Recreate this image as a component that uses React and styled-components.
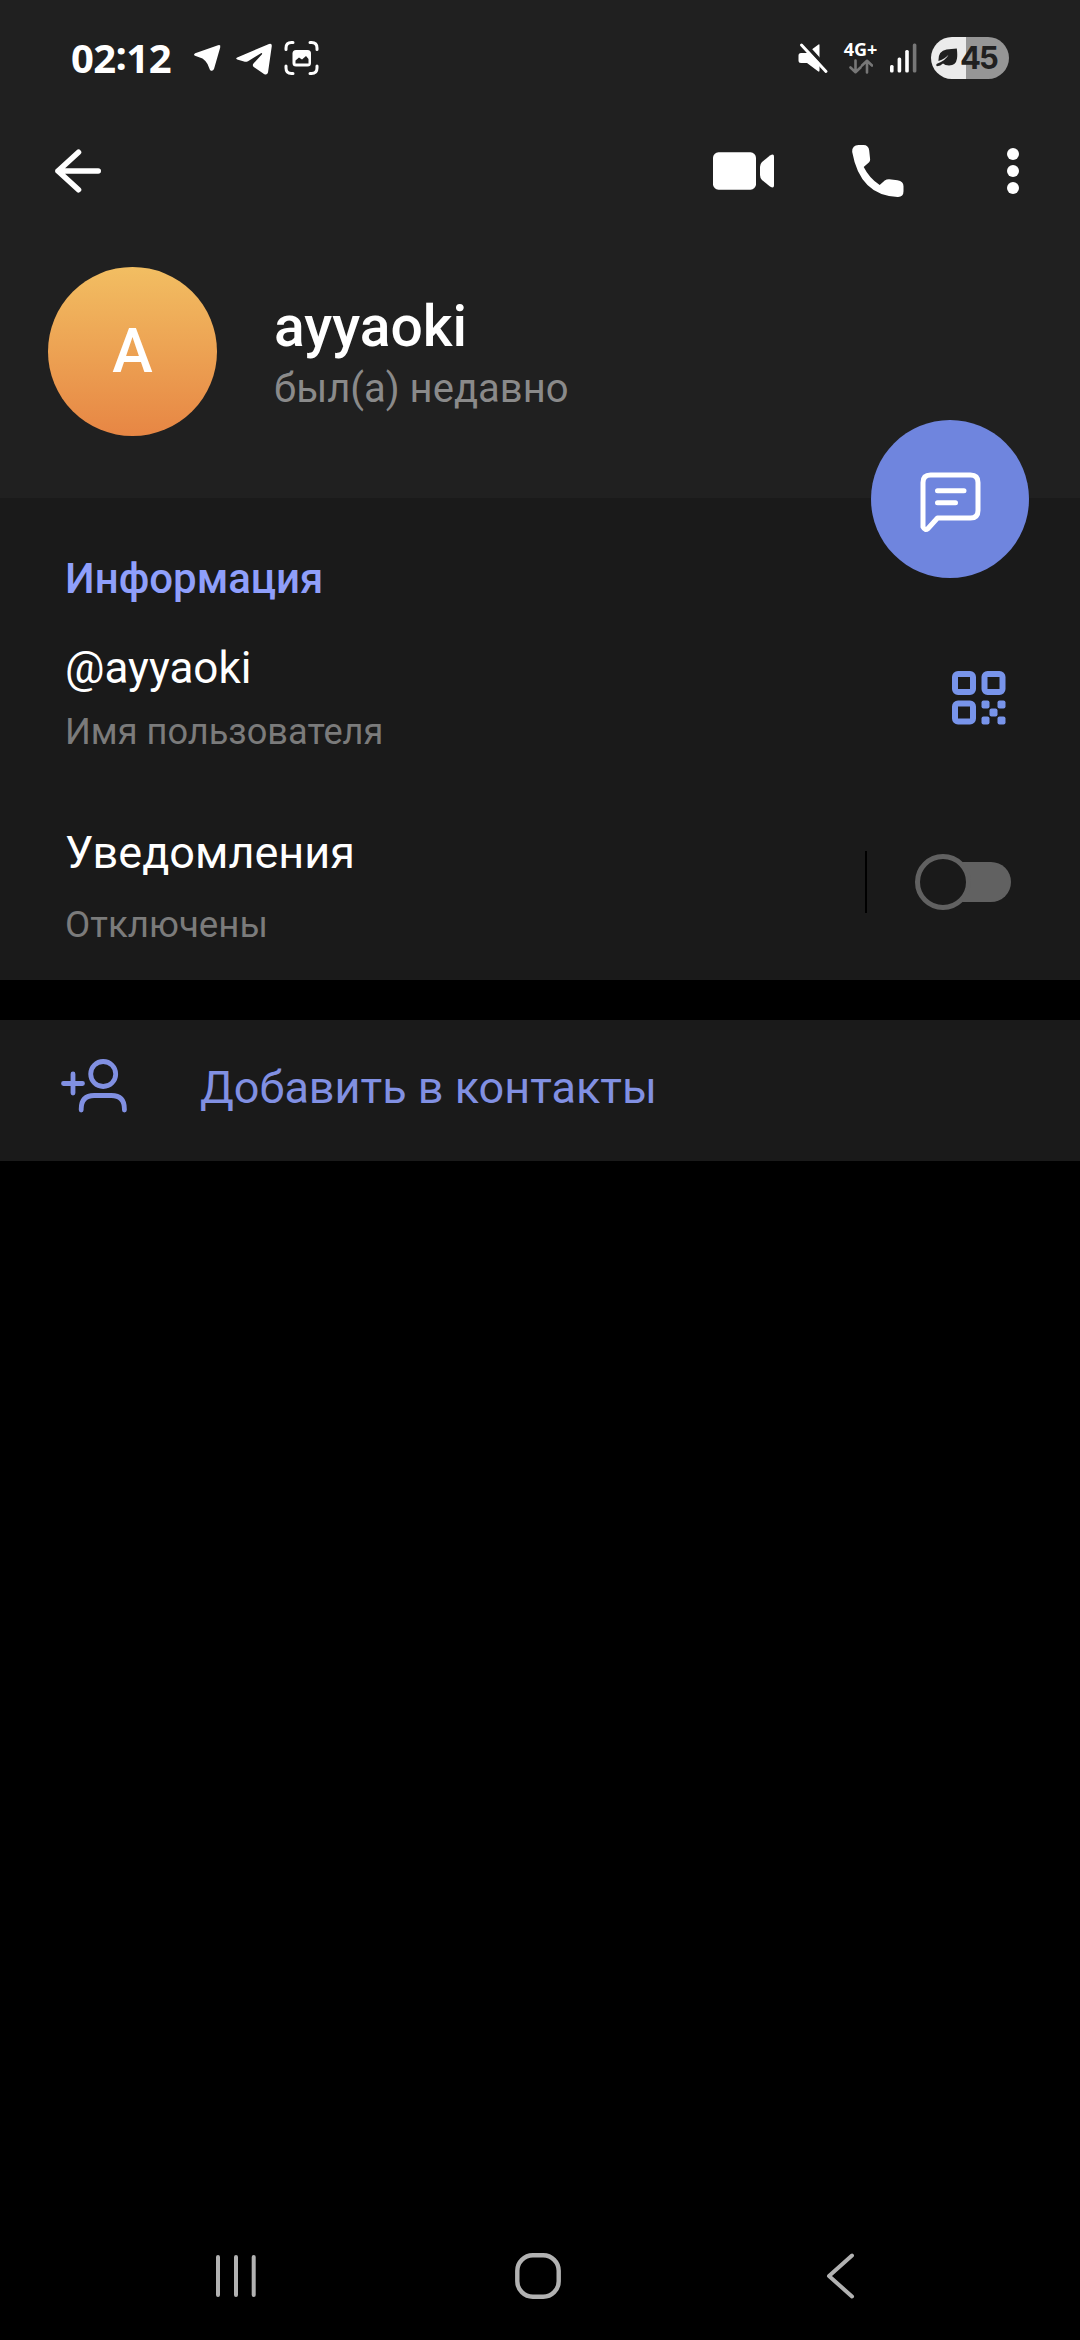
import styled, { createGlobalStyle } from "styled-components";

const GlobalStyle = createGlobalStyle`
    * {
        box-sizing: border-box;
    }

    body {
        margin: 0;
        background-color: #000;
        font-family: Roboto, sans-serif;
    }

    svg {
        display: block;
        flex-shrink: 0;
    }

    button {
        background: none;
        border: none;
        padding: 0;
        font: inherit;
        color: inherit;
    }
`;

const Screen = styled.div`
    display: flex;
    flex-direction: column;
    width: 1080px;
    height: 2340px;
    background-color: #000;
    color: #fff;
    overflow: hidden;
`;

const Header = styled.header`
    height: 498px;
    background-color: #202020;
`;

const StatusBar = styled.div`
    display: flex;
    align-items: center;
    height: 116px;
    padding: 0 71px;
`;

const Time = styled.span`
    width: 122px;
    font-family: "Open Sans", sans-serif;
    font-size: 40px;
    font-weight: 700;
    line-height: 48px;
    letter-spacing: -0.6px;
    white-space: nowrap;
`;

const Colon = styled.span`
    line-height: 1;
    vertical-align: 3px;
`;

const StatusIcons = styled.div`
    display: flex;
    align-items: center;
    margin-left: ${(props) => (props.$end ? "auto" : "0")};
    gap: ${(props) => props.$gap}px;
`;

const Network = styled.div`
    display: flex;
    flex-direction: column;
    align-items: center;
    gap: 3px;
    width: 35px;
    margin-right: -2px;
    font-family: "Open Sans", sans-serif;
    font-size: 18px;
    font-weight: 700;
    line-height: 14px;
    white-space: nowrap;
`;

const Battery = styled.div`
    display: flex;
    align-items: center;
    width: 78px;
    height: 42px;
    padding-left: 5px;
    border-radius: 21px;
    background: linear-gradient(
        to right,
        #ebebeb 0 ${(props) => props.$level}%,
        #969696 ${(props) => props.$level}% 100%
    );
    color: #202020;
    font-family: Inter, sans-serif;
    font-size: 31px;
    font-weight: 700;
    line-height: 42px;
    letter-spacing: -2px;

    svg {
        margin-right: 2px;
    }
`;

const Toolbar = styled.div`
    display: flex;
    align-items: center;
    height: 110px;
    padding: 0 61px 0 55px;
`;

const IconButton = styled.button`
    margin-left: ${(props) => props.$left || "0"};
    margin-right: ${(props) => props.$right || "0"};
`;

const Profile = styled.div`
    display: flex;
    gap: 57px;
    padding: 41px 48px 0;
`;

const Avatar = styled.div`
    width: 169px;
    height: 169px;
    border-radius: 50%;
    background: linear-gradient(#f2be62, #e78644);
    font-size: 61px;
    font-weight: 500;
    line-height: 169px;
    text-align: center;
`;

const Name = styled.h1`
    margin: 30px 0 7px;
    font-size: 57px;
    font-weight: 500;
    line-height: 60px;
`;

const LastSeen = styled.p`
    margin: 0;
    color: #8a8a8a;
    font-size: 40px;
    line-height: 50px;
`;

const Info = styled.section`
    position: relative;
    height: 482px;
    padding: 56px 69px 0 65px;
    background-color: #1a1a1a;
`;

const MessageButton = styled.button`
    position: absolute;
    top: -78px;
    right: 51px;
    display: flex;
    align-items: center;
    justify-content: center;
    width: 158px;
    height: 158px;
    padding-top: 6px;
    border-radius: 50%;
    background-color: #6f85de;
`;

const SectionTitle = styled.h2`
    margin: 0;
    color: #8f9ffb;
    font-size: 42px;
    font-weight: 500;
    line-height: 50px;
`;

const Row = styled.div`
    display: flex;
    align-items: center;
    justify-content: space-between;
    margin-top: ${(props) => props.$top}px;
`;

const Label = styled.p`
    margin: 0 0 ${(props) => props.$gap}px;
    font-size: ${(props) => props.$size}px;
    line-height: 54px;
`;

const Hint = styled.p`
    margin: 0;
    color: #7b7b7b;
    font-size: ${(props) => props.$size}px;
    line-height: 44px;
`;

const SwitchArea = styled.div`
    display: flex;
    align-items: center;
    height: 62px;
    margin-bottom: 10px;
    border-left: 2px solid #000;
    padding-left: 48px;
`;

const Track = styled.div`
    display: flex;
    align-items: center;
    width: 86px;
    height: 40px;
    margin-left: 10px;
    border-radius: 20px;
    background-color: #616161;
`;

const Thumb = styled.div`
    flex-shrink: 0;
    width: 56px;
    height: 56px;
    margin-left: -10px;
    border: 5px solid #616161;
    border-radius: 50%;
    background-color: #1a1a1a;
`;

const AddContact = styled.button`
    display: flex;
    align-items: center;
    gap: 73px;
    height: 141px;
    margin-top: 40px;
    padding: 0 60px 10px;
    background-color: #1a1a1a;
    color: #8190e2;
    font-size: 45px;
    line-height: 54px;

    span {
        padding-top: 4px;
    }
`;

const NavBar = styled.nav`
    display: flex;
    align-items: center;
    height: 128px;
    margin-top: auto;
    padding-left: 214px;
    color: #b2b2b2;
`;

function Icon({ w, h, stroke, children }) {
    return (
        <svg
            width={w}
            height={h}
            viewBox={`0 0 ${w} ${h}`}
            fill={stroke ? "none" : "currentColor"}
            stroke={stroke ? "currentColor" : "none"}
            strokeWidth={stroke}
            strokeLinecap="round"
            strokeLinejoin="round"
        >
            {children}
        </svg>
    );
}

function PhoneStatus() {
    return (
        <StatusBar>
            <Time>
                02<Colon>:</Colon>12
            </Time>
            <StatusIcons $gap={12}>
                <Icon w={30} h={36}>
                    <path d="M2.2 13.2 25 5.2q3-.8 2.2 2.2l-6.2 21.7q-1.5 3-4 .8L14.5 24q-1.5-3-5-5.5L2 15.8q-2-1.3.2-2.6z" />
                </Icon>
                <Icon w={37} h={36}>
                    <path d="M2.2 17.5 34 4q3-1 2.8 2L33 32.5q-1 3-4 1.5L19.5 27.500q-3-2-.8-4.200L27 14.200q.6-1.500-1-1L13 21.200q-2 1-4 .4L2.200 19.500q-2-1 0-2z" />
                </Icon>
                <Icon w={36} h={36}>
                    <path
                        d="M2 9.500V8q0-5.500 5.500-5.500H9M26 2.500h1.500Q33 2.500 33 8v1.500M33 26v2q0 5.500-5.500 5.500H26M9 33.500H7.500Q2 33.500 2 28v-2"
                        fill="none"
                        stroke="currentColor"
                        strokeWidth="3"
                    />
                    <rect x="8.500" y="10" width="18.500" height="16.500" rx="3.500" />
                    <path d="M11.500 23.500v-3l3.500-3 3 2 4-3.500 2.500 3v4.500z" fill="#202020" />
                </Icon>
            </StatusIcons>
            <StatusIcons $end $gap={14}>
                <Icon w={31} h={32}>
                    <path d="M3 11h6L20.500 2.500q1-.8 1 .8V28.500q0 1.800-1.500.8L9 21H3q-2.500 0-2.500-2.500v-5Q.5 11 3 11z" />
                    <path d="M5.500.5 30 27.500" stroke="#202020" strokeWidth="4" />
                    <path d="M3.500 3 28 29.500" stroke="currentColor" strokeWidth="3" />
                </Icon>
                <Network>
                    4G+
                    <Icon w={24} h={15} stroke={2.6}>
                        <path
                            d="M6.500 1.500v11.500M1.500 8.500l5 4.700 5-4.700M18 13.500V2M13 6.500l5-4.700 5 4.700"
                            stroke="#777"
                        />
                    </Icon>
                </Network>
                <Icon w={27} h={30}>
                    <rect x="0" y="22" width="3.600" height="7.500" rx="1.500" />
                    <rect x="7.600" y="14.500" width="3.600" height="15" rx="1.500" />
                    <rect x="15.200" y="7" width="3.600" height="22.500" rx="1.500" />
                    <rect x="22.800" y="0.5" width="3.600" height="29" rx="1.500" fill="#777" />
                </Icon>
                <Battery $level={44.5}>
                    <Icon w={22} h={20}>
                        <path d="M2.500 13q-.5-10 8-11.500 5-.5 10.300-1 .8 6 .2 10-1 7-8 7-4 0-6-2-2.500 2.500-6 2.800-1.500-1.500 0-2.500 9-3.500 11.500-9Q9.500 10.500 2.500 13z" />
                    </Icon>
                    45
                </Battery>
            </StatusIcons>
        </StatusBar>
    );
}

function TopBar() {
    return (
        <Toolbar>
            <IconButton aria-label="Назад">
                <Icon w={48} h={44} stroke={5.6}>
                    <path d="M43.200 22H3M23.500 3.300 3 22l20.500 18.700" />
                </Icon>
            </IconButton>
            <IconButton $left="auto" aria-label="Видеозвонок">
                <Icon w={61} h={38}>
                    <rect x="0" y="0.300" width="43" height="37.400" rx="5.500" />
                    <path d="M47 15q0-3 2-5l8-6.500q4-2.500 4 1v29q0 3.500-4 1L49 28q-2-2-2-5z" />
                </Icon>
            </IconButton>
            <IconButton $left="78px" aria-label="Позвонить">
                <Icon w={52} h={52}>
                    <path d="M6.500 0h5q5 0 5.700 5.500l.9 8.500q.2 2-1 3.200L11.700 22q5.800 11.500 16 18l5-4.500q2-1.300 4.500-1.200l8.300.9q6 .8 6 6v5q0 6-6 5.700Q8 50.500.200 7 0 0 6.500 0z" />
                </Icon>
            </IconButton>
            <IconButton $left="103px" aria-label="Меню">
                <Icon w={12} h={48}>
                    <circle cx="6" cy="7" r="6" />
                    <circle cx="6" cy="24" r="6" />
                    <circle cx="6" cy="41" r="6" />
                </Icon>
            </IconButton>
        </Toolbar>
    );
}

function QrIcon() {
    return (
        <Icon w={54} h={54}>
            <g fill="none" stroke="#7894ea" strokeWidth="6">
                <rect x="3" y="3" width="18" height="18" rx="3" />
                <rect x="32.500" y="3" width="18" height="18" rx="3" />
                <rect x="3" y="32.500" width="18" height="18" rx="3" />
            </g>
            <g fill="#7894ea">
                <rect x="29.500" y="29.500" width="8" height="8" rx="2" />
                <rect x="45.500" y="29.500" width="8" height="8" rx="2" />
                <rect x="37.500" y="37.500" width="8" height="8" rx="2" />
                <rect x="29.500" y="45.500" width="8" height="8" rx="2" />
                <rect x="45.500" y="45.500" width="8" height="8" rx="2" />
            </g>
        </Icon>
    );
}

function App() {
    return (
        <>
            <GlobalStyle />
            <Screen>
                <Header>
                    <PhoneStatus />
                    <TopBar />
                    <Profile>
                        <Avatar>A</Avatar>
                        <div>
                            <Name>ayyaoki</Name>
                            <LastSeen>был(а) недавно</LastSeen>
                        </div>
                    </Profile>
                </Header>

                <Info>
                    <MessageButton aria-label="Написать">
                        <Icon w={61} h={61} stroke={5}>
                            <path d="M10.500 3h40q7.500 0 7.500 7.500v28q0 7.500-7.500 7.500H17.500L8 56.500q-3 2.500-5-1.500V10.500Q3 3 10.500 3zM17.500 18.700h26.500M17.500 30.700h18" />
                        </Icon>
                    </MessageButton>
                    <SectionTitle>Информация</SectionTitle>
                    <Row $top={37}>
                        <div>
                            <Label $size={44} $gap={15}>
                                @ayyaoki
                            </Label>
                            <Hint $size={36.2}>Имя пользователя</Hint>
                        </div>
                        <IconButton $right="5px" aria-label="QR-код">
                            <QrIcon />
                        </IconButton>
                    </Row>
                    <Row $top={72}>
                        <div>
                            <Label $size={45} $gap={23}>
                                Уведомления
                            </Label>
                            <Hint $size={36.7}>Отключены</Hint>
                        </div>
                        <SwitchArea>
                            <Track>
                                <Thumb />
                            </Track>
                        </SwitchArea>
                    </Row>
                </Info>

                <AddContact>
                    <Icon w={67} h={54} stroke={4.8}>
                        <path d="M3.500 24.500h19M13 15v19" />
                        <circle cx="43.200" cy="15" r="12.500" />
                        <path d="M21.200 51v-1q0-13.500 13-13.500h17.200q13 0 13 13.500v1" />
                    </Icon>
                    <span>Добавить в контакты</span>
                </AddContact>

                <NavBar>
                    <IconButton aria-label="Недавние">
                        <Icon w={44} h={44} stroke={4}>
                            <path d="M4 3v38M22 3v38M39.700 3v38" />
                        </Icon>
                    </IconButton>
                    <IconButton $left="257px" aria-label="Домой">
                        <Icon w={46} h={46} stroke={4.4}>
                            <rect x="2.300" y="2.300" width="41.400" height="41.400" rx="15.500" />
                        </Icon>
                    </IconButton>
                    <IconButton $left="265px" aria-label="Назад">
                        <Icon w={30} h={46} stroke={4}>
                            <path d="M26 2.500 3 23l23 20.500" />
                        </Icon>
                    </IconButton>
                </NavBar>
            </Screen>
        </>
    );
}

export default App;
